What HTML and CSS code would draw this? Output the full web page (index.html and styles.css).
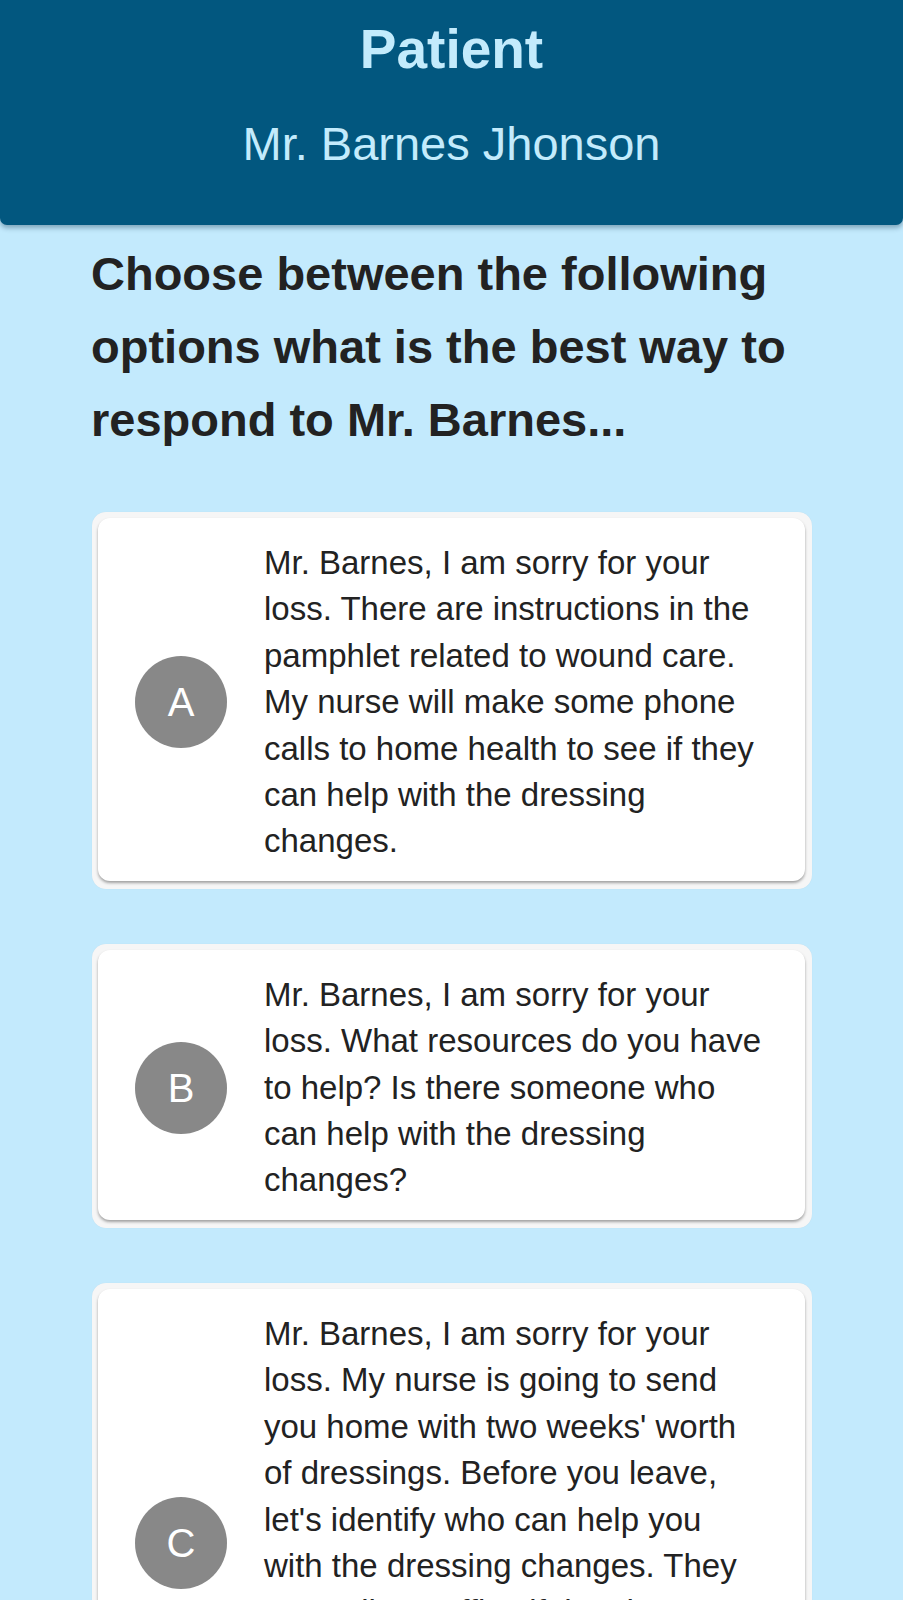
FILE: index.html
```html
<!DOCTYPE html>
<html lang="en">
<head>
<meta charset="utf-8">
<title>Patient</title>
<link rel="stylesheet" href="styles.css">
</head>
<body>
<header class="header">
  <h1 class="header-title">Patient</h1>
  <p class="header-name">Mr. Barnes Jhonson</p>
</header>
<main class="content">
  <h2 class="question">Choose between the following options what is the best way to respond to Mr. Barnes...</h2>
  <div class="options">
    <div class="option">
      <div class="option-card">
        <div class="option-letter">A</div>
        <p class="option-text">Mr. Barnes, I am sorry for your loss. There are instructions in the pamphlet related to wound care. My nurse will make some phone calls to home health to see if they can help with the dressing changes.</p>
      </div>
    </div>
    <div class="option">
      <div class="option-card">
        <div class="option-letter">B</div>
        <p class="option-text">Mr. Barnes, I am sorry for your loss. What resources do you have to help? Is there someone who can help with the dressing changes?</p>
      </div>
    </div>
    <div class="option">
      <div class="option-card">
        <div class="option-letter">C</div>
        <p class="option-text">Mr. Barnes, I am sorry for your loss. My nurse is going to send you home with two weeks' worth of dressings. Before you leave, let's identify who can help you with the dressing changes. They can call our office if they have any questions or concerns about the dressing changes or the wound once you get home.</p>
      </div>
    </div>
  </div>
</main>
</body>
</html>
```

FILE: styles.css
```css
html, body {
  margin: 0;
  padding: 0;
}
body {
  background: #c3eafd;
  font-family: "Liberation Sans", Arial, Helvetica, sans-serif;
  color: #222222;
}
.header {
  background: #02577f;
  height: 225px;
  box-sizing: border-box;
  padding-top: 18px;
  border-radius: 0 0 7px 7px;
  box-shadow: 0 3px 5px rgba(0, 40, 70, 0.35);
  text-align: center;
  color: #c3ebfc;
}
.header-title {
  margin: 0;
  font-size: 55px;
  font-weight: 700;
  line-height: 63px;
}
.header-name {
  margin: 36px 0 0;
  font-size: 47px;
  font-weight: 400;
  line-height: 53px;
}
.content {
  padding: 0 0 40px;
}
.question {
  margin: 12px 70px 0 91px;
  font-size: 47px;
  font-weight: 700;
  line-height: 73px;
  color: #222222;
}
.options {
  margin: 56px 0 0 92px;
  width: 720px;
  display: flex;
  flex-direction: column;
  gap: 55px;
}
.option {
  background: #f6f6f6;
  border-radius: 14px;
  padding: 6px 7px 8px 6px;
  box-shadow: 0 0 1px rgba(0, 0, 0, 0.08);
}
.option-card {
  background: #ffffff;
  border-radius: 12px;
  box-shadow: 0 2px 3px rgba(0, 0, 0, 0.35);
  display: flex;
  align-items: center;
  padding: 22px 40px 16px 37px;
}
.option-letter {
  flex: none;
  width: 92px;
  height: 92px;
  border-radius: 50%;
  background: #888888;
  color: #ffffff;
  font-size: 40px;
  line-height: 92px;
  text-align: center;
  margin-right: 37px;
}
.option-text {
  flex: 1;
  margin: 0;
  font-size: 33px;
  line-height: 46.4px;
  color: #222222;
}
```
